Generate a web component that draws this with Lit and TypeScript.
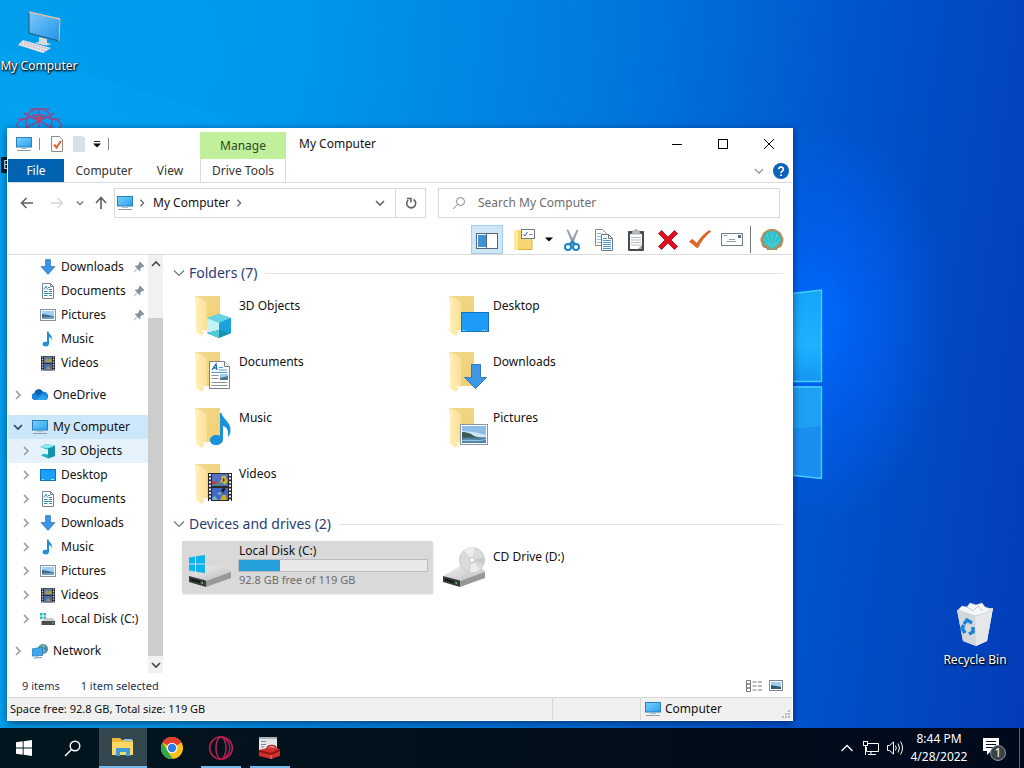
import { LitElement, html, css, nothing, TemplateResult } from "lit";
import { customElement, state } from "lit/decorators.js";
import { classMap } from "lit/directives/class-map.js";
import { styleMap } from "lit/directives/style-map.js";

type Icon = () => TemplateResult;

/* ---------- small (16px) icons ---------- */

const monitor: Icon = () => html`<svg width="16" height="16" viewBox="0 0 16 16" aria-hidden="true">
  <defs><linearGradient id="scr" x1="0" y1="0" x2="1" y2="1"><stop offset="0" stop-color="#79d2fb"/><stop offset="1" stop-color="#2aa0ee"/></linearGradient></defs>
  <rect x=".5" y="1.500" width="15" height="9.500" fill="url(#scr)" stroke="#2a7fb8"/>
  <path d="M5 12.500h6" stroke="#a9c0cf"/><path d="M1 14.500h14" stroke="#8d9ca8"/></svg>`;

const arrowDown: Icon = () => html`<svg width="16" height="16" viewBox="0 0 16 16" aria-hidden="true">
  <path d="M5.500.5h5v7h4.500L8 15.500 1 7.500h4.500z" fill="#3d94e3" stroke="#2f7cc4" stroke-width=".7"/></svg>`;

const documentIcon: Icon = () => html`<svg width="16" height="16" viewBox="0 0 16 16" aria-hidden="true">
  <path d="M2.500.5h8l3 3v12h-11z" fill="#fff" stroke="#73828c"/><path d="M10.500.5v3h3" fill="none" stroke="#73828c"/>
  <path d="M4 6.500l2-3.500 1.500 3.500M8 4.500h2M4 8.500h3.500M9 6.500h3M9 8.500h3M4 10.500h8M4 12.500h3.500M9 12.500h3" fill="none" stroke="#3b8fae"/></svg>`;

const pictureIcon: Icon = () => html`<svg width="16" height="16" viewBox="0 0 16 16" aria-hidden="true">
  <rect x=".5" y="2.500" width="15" height="11" fill="#fff" stroke="#8795a1"/>
  <rect x="2" y="4" width="12" height="8" fill="#9fd0f3"/><path d="M2 7l4 .5 8 2V12H2z" fill="#3f6e8c"/><path d="M2 10.500l12-.5v2H2z" fill="#6fa9cf"/></svg>`;

const musicIcon: Icon = () => html`<svg width="16" height="16" viewBox="0 0 16 16" aria-hidden="true">
  <path d="M7 .5h1.500c.3 3 4.500 4 3.500 9.500-.2-2.500-1.200-3.500-3-4V12.500c0 2-1.500 3-3.200 3S2.500 14.500 2.500 13s1.500-2.300 3-2.300c.6 0 1 .1 1.500.3z" fill="#1e90d8"/></svg>`;

const videoIcon: Icon = () => html`<svg width="16" height="16" viewBox="0 0 16 16" aria-hidden="true">
  <rect x="1" y="1" width="14" height="14.500" fill="#2c2c30"/>
  <rect x="4" y="1.500" width="8" height="6.500" fill="#5f79a8"/><rect x="4" y="9" width="8" height="6" fill="#4b6cae"/>
  <path d="M5 6l2-3 2 2 1-2 2 2v2H5zM6 14l2-3 3 3z" fill="#a69a45"/>
  <path d="M2.500 1.500v14M13.500 1.500v14" stroke="#e4e4e4" stroke-width="1.200" stroke-dasharray="1.200 1.300"/></svg>`;

const cloudIcon: Icon = () => html`<svg width="16" height="16" viewBox="0 0 16 16" aria-hidden="true">
  <path d="M3.500 13A3.500 3.500 0 0 1 2.500 6a4.500 4.500 0 0 1 8.500-1A4 4 0 0 1 16 9.500a3.300 3.300 0 0 1-3 3.500z" fill="#1a86d9"/>
  <path d="M2.500 6a4.500 4.500 0 0 1 8.500-1L6 9z" fill="#0c5fb3"/><path d="M3.500 13L11 8l4.800 3a3 3 0 0 1-2.800 2z" fill="#2ea5ee"/></svg>`;

const cubeIcon: Icon = () => html`<svg width="16" height="16" viewBox="0 0 16 16" aria-hidden="true">
  <path d="M0 4l6-3 9 1.500v10.500l-7 2.500-7-3 3-2V5z" fill="#27b2c8"/><path d="M0 4l7-3 8 2-7 2.500z" fill="#8ce9ee"/>
  <path d="M8 5.500L15 3v10l-7 2.500z" fill="#1593ad"/><path d="M3 5.500l5 1v5l-5-1z" fill="#d8f7f7"/></svg>`;

const desktopIcon: Icon = () => html`<svg width="16" height="16" viewBox="0 0 16 16" aria-hidden="true">
  <rect x=".5" y="2.500" width="15" height="11" fill="#18a0fb" stroke="#1573b5"/><path d="M2 12.500h2M11 12.500h3" stroke="#bfe4ff"/></svg>`;

const diskIcon: Icon = () => html`<svg width="16" height="16" viewBox="0 0 16 16" aria-hidden="true">
  <path d="M0 2h2.500v2.500H0zM3.500 2H6v2.500H3.500zM0 5.500h2.500V8H0zM3.500 5.500H6V8H3.500z" fill="#25b5c4"/>
  <path d="M2 10l3-3h8l2 3z" fill="#c9cccf"/><path d="M1.500 10h13.500v4H1.500z" fill="#4a4d50"/><path d="M12 12h1.500" stroke="#7ce07c"/></svg>`;

const networkIcon: Icon = () => html`<svg width="16" height="16" viewBox="0 0 16 16" aria-hidden="true">
  <circle cx="11" cy="6" r="5" fill="#4b87b0"/><path d="M8 3l4-2 2 3-3 1 3 3-3 2z" fill="#77b49e"/>
  <path d="M0 6l10.500-2v8.500L0 13z" fill="#3fa9ef" stroke="#2f78b0" stroke-width=".8"/><path d="M5 13v1.500M2 15l8-.5" stroke="#7c94a5"/></svg>`;

const pin: Icon = () => html`<svg width="12" height="12" viewBox="0 0 12 12" aria-hidden="true">
  <path d="M7 1l4 4-1 .8-.9-.3L7 7.800 6.800 10 2.200 5.300l2-.3L6.500 2.900 6.200 2zM4 7.500L.8 11.200" fill="#8a929b" stroke="#8a929b" stroke-width=".8"/></svg>`;

const chev = (dir: "right" | "down" | "up", size = 10) => {
  const d = { right: "M3 1l4 4-4 4", down: "M1 3l4 4 4-4", up: "M1 7l4-4 4 4" }[dir];
  return html`<svg class="chev" width=${size} height=${size} viewBox="0 0 10 10" aria-hidden="true"><path d=${d} fill="none" stroke="currentColor" stroke-width="1.600"/></svg>`;
};

const thinChevron = html`<svg class="chev" width="12" height="12" viewBox="0 0 12 12" aria-hidden="true"><path d="M1 3.500l5 5 5-5" fill="none" stroke="currentColor" stroke-width="1.100"/></svg>`;

/* ---------- large (48px) icons ---------- */

const folder = (inner: TemplateResult) => html`<svg class="big" width="48" height="48" viewBox="0 0 48 48" aria-hidden="true">
  <defs>
    <linearGradient id="fb" x1="0" y1="0" x2="1" y2="1"><stop offset="0" stop-color="#f3d98b"/><stop offset="1" stop-color="#f0cf74"/></linearGradient>
    <linearGradient id="ff" x1="0" y1="0" x2="1" y2="0"><stop offset="0" stop-color="#ffefb8"/><stop offset="1" stop-color="#f9e096"/></linearGradient>
  </defs>
  <path d="M7 4h25v34H13z" fill="url(#fb)"/><path d="M8 4l11 6v27l-5 7-6-4z" fill="url(#ff)"/><path d="M14 38h5l-4 3z" fill="#fff7dc"/>${inner}</svg>`;

const bigCube: Icon = () => folder(html`<svg>
  <path d="M31 22l12 4v15l-12 5-12-5V26z" fill="#2ab3d0"/><path d="M31 22l12 4-12 5-12-5z" fill="#62d4e3"/>
  <path d="M19 26l12 5v7l-12 3z" fill="#c6f3f5"/><path d="M31 31l12-5v15l-12-3z" fill="#1ba1dc"/><path d="M19 41l12-3 12 3-12 5z" fill="#1993ae"/><path d="M31 38v8l-12-5z" fill="#52cbd5"/></svg>`);

const bigDesktop: Icon = () => folder(html`<svg>
  <rect x="19.500" y="20.500" width="27" height="19" fill="#1c9cf6" stroke="#1776bb"/><path d="M21 38.500h3M40 38.500h5" stroke="#bfe4ff" stroke-dasharray="1.200 1"/></svg>`);

const bigDoc: Icon = () => folder(html`<svg>
  <path d="M21.500 13.500h15l5 5v22h-20z" fill="#fff" stroke="#7b8184"/><path d="M36.500 13.500v5h5" fill="#eee" stroke="#7b8184"/>
  <path d="M24 22l4-6 1 6M25.500 20h3" fill="none" stroke="#1c6db5" stroke-width="1.300"/>
  <path d="M31 19.500h4M31 22h8M23.500 24.500h16" stroke="#4d9fd8"/><path d="M23.500 27.500h7M23.500 30.500h7M23.500 34.500h16M23.500 37.500h16" stroke="#8c9297"/>
  <rect x="32" y="26" width="8" height="6" fill="#51758b"/><path d="M32 26h8v2l-8 2z" fill="#9ccdee"/></svg>`);

const bigDownload: Icon = () => folder(html`<svg><path d="M29.500 16.500h9v13h6L33.500 40.500l-11-11h7z" fill="#3e97e4" stroke="#3079c0"/></svg>`);

const bigMusic: Icon = () => folder(html`<svg>
  <path d="M32 9h1.500c1 6 10 9 9 18-.2 3-1.200 5-2.500 6 1-6-1-10-5-11v13c0 4-3.500 6-7 6s-6-2-6-5 3-5 6.500-5c1.300 0 2.500.2 3.500.8z" fill="#1a91da"/></svg>`);

const bigPicture: Icon = () => folder(html`<svg>
  <rect x="18.500" y="20.500" width="27" height="20" fill="#fff" stroke="#8795a1"/><rect x="20" y="22" width="24" height="17" fill="#8cbce9"/>
  <path d="M20 27l12 1 12 3v2H20z" fill="#cfe5f3"/><path d="M20 28c5 0 8 1 12 4l7 2H20z" fill="#395b55"/><path d="M20 33.500h24V39H20z" fill="#4b80a3"/><path d="M20 36c8-1 16 1 24-1v1c-8 2-16 1-24 1z" fill="#9cc5dd"/></svg>`);

const bigVideo: Icon = () => folder(html`<svg>
  <rect x="20" y="13" width="24" height="28" fill="#2a2a2e"/><rect x="24" y="14" width="16" height="12" fill="#5573c4"/><rect x="24" y="28" width="16" height="12" fill="#4468c0"/>
  <path d="M24 21l3 1 2-1 1 3h-6z" fill="#c4384a"/><path d="M33 16h5v3l2 1-3 5-3-3-3 1 3-4z" fill="#d3b92f"/><path d="M29 22l3 2-2 2h-3z" fill="#4c9c46"/><path d="M35 18l2 2-2 2z" fill="#222"/>
  <path d="M35 28h2v2l-2 3-2-3z" fill="#222"/><path d="M32 40l2-5h4l1 5z" fill="#c9ad2a"/><path d="M24 38l3-2 3 4h-6zM29 33l3-1 2 2-3 1z" fill="#6fb3c9"/>
  <path d="M22 14v27M42 14v27" stroke="#ececec" stroke-width="2" stroke-dasharray="2 1.600"/></svg>`);

const driveBody = html`<svg>
  <defs><linearGradient id="dt" x1="0" y1="0" x2="1" y2="1"><stop offset="0" stop-color="#f1f1f1"/><stop offset="1" stop-color="#bcbcbc"/></linearGradient></defs>
  <path d="M1 33l17-10h18l7 5v3L18 38z" fill="url(#dt)"/><path d="M18 38l25-9v6l-25 9z" fill="#989898"/><path d="M1 33l17 4.500V44L1 39z" fill="#3a3a3a"/><path d="M3 35.500l9 2.500v2l-9-2.500z" fill="#161616"/><path d="M13.500 39l1.500.5v1.500l-1.500-.5z" fill="#6be06b"/></svg>`;

const localDisk: Icon = () => html`<svg class="big" width="48" height="48" viewBox="0 0 48 48" aria-hidden="true">${driveBody}
  <path d="M1 14.500l6-1v7H1zM8 13.300l9-1.300v8.500H8zM1 21.500h6v7l-6-1zM8 21.500h9V30l-9-1.300z" fill="#0cb3ef"/></svg>`;

const cdDrive: Icon = () => html`<svg class="big" width="48" height="48" viewBox="0 0 48 48" aria-hidden="true">${driveBody}
  <circle cx="30" cy="17" r="12.500" fill="#d9dbdc" stroke="#c6c9cb"/><path d="M30 17L22 7A12.500 12.500 0 0 1 33 4.800zM30 17l8 9.500a12.500 12.500 0 0 1-10 2.500z" fill="#ecedee"/><path d="M30 17l12-3a12.500 12.500 0 0 1-.5 7z" fill="#c8cbcd"/>
  <circle cx="30" cy="17" r="3" fill="#e9eaeb" stroke="#c4c7c9"/><circle cx="30" cy="17" r="1.200" fill="#fff"/></svg>`;

/* ---------- data ---------- */

interface TreeRow { name: string; icon: Icon; level: 0 | 1; expand?: "right" | "down"; pinned?: boolean; look?: "current" | "hover"; gap?: boolean }

const TREE: TreeRow[] = [
  { name: "Downloads", icon: arrowDown, level: 1, pinned: true },
  { name: "Documents", icon: documentIcon, level: 1, pinned: true },
  { name: "Pictures", icon: pictureIcon, level: 1, pinned: true },
  { name: "Music", icon: musicIcon, level: 1 },
  { name: "Videos", icon: videoIcon, level: 1 },
  { name: "OneDrive", icon: cloudIcon, level: 0, expand: "right", gap: true },
  { name: "My Computer", icon: monitor, level: 0, expand: "down", look: "current", gap: true },
  { name: "3D Objects", icon: cubeIcon, level: 1, expand: "right", look: "hover" },
  { name: "Desktop", icon: desktopIcon, level: 1, expand: "right" },
  { name: "Documents", icon: documentIcon, level: 1, expand: "right" },
  { name: "Downloads", icon: arrowDown, level: 1, expand: "right" },
  { name: "Music", icon: musicIcon, level: 1, expand: "right" },
  { name: "Pictures", icon: pictureIcon, level: 1, expand: "right" },
  { name: "Videos", icon: videoIcon, level: 1, expand: "right" },
  { name: "Local Disk (C:)", icon: diskIcon, level: 1, expand: "right" },
  { name: "Network", icon: networkIcon, level: 0, expand: "right", gap: true },
];

const FOLDERS: { name: string; icon: Icon }[] = [
  { name: "3D Objects", icon: bigCube },
  { name: "Desktop", icon: bigDesktop },
  { name: "Documents", icon: bigDoc },
  { name: "Downloads", icon: bigDownload },
  { name: "Music", icon: bigMusic },
  { name: "Pictures", icon: bigPicture },
  { name: "Videos", icon: bigVideo },
];

const TOOLS: { label: string; icon: Icon }[] = [
  { label: "Cut", icon: () => html`<svg width="24" height="24" viewBox="0 0 24 24" aria-hidden="true">
    <path d="M7 2l1 0 7 14-2 1zM18 2l-1 0-7 14 2 1z" fill="#a4adb5" stroke="#7d8790" stroke-width=".6"/>
    <circle cx="8" cy="19" r="3" fill="none" stroke="#1b82c8" stroke-width="2"/><circle cx="16" cy="19" r="3" fill="none" stroke="#1b82c8" stroke-width="2"/><path d="M9.500 16.500l3-3 3 3" fill="none" stroke="#1b82c8" stroke-width="2"/></svg>` },
  { label: "Copy", icon: () => html`<svg width="24" height="24" viewBox="0 0 24 24" aria-hidden="true">
    <path d="M3.500 1.500h7l4 4v12h-11z" fill="#fff" stroke="#7f8c97"/><path d="M5 5.500h4M5 8.500h7M5 11.500h7M5 14.500h7" stroke="#8cb8dc"/>
    <path d="M9.500 6.500h7l4 4v12h-11z" fill="#fff" stroke="#6c7a86"/><path d="M16.500 6.500v4h4" fill="none" stroke="#6c7a86"/><path d="M11 10.500h4M11 12.500h8M11 14.500h8M11 16.500h8M11 18.500h8M11 20.500h8" stroke="#4f97d0"/></svg>` },
  { label: "Paste", icon: () => html`<svg width="24" height="24" viewBox="0 0 24 24" aria-hidden="true">
    <rect x="4" y="3" width="16" height="20" rx="1" fill="#444b50"/><rect x="6" y="6" width="12" height="15" fill="#fff"/><path d="M8 5V3h2.500a1.500 1.500 0 0 1 3 0H16v3H8z" fill="#b9c0c5" stroke="#7d858b" stroke-width=".6"/>
    <path d="M7 9.500h10M7 12h10M7 14.500h10M7 17h10" stroke="#b2b8bc"/><path d="M14 21l4-4v4z" fill="#9aa2a8"/></svg>` },
  { label: "Delete", icon: () => html`<svg width="24" height="24" viewBox="0 0 24 24" aria-hidden="true">
    <path d="M5.500 2.500L12 9l6.500-6.500 3 3L15 12l6.500 6.500-3 3L12 15l-6.500 6.500-3-3L9 12 2.500 5.500z" fill="#dc0f1e" stroke="#a80a17" stroke-width=".8"/></svg>` },
  { label: "Properties", icon: () => html`<svg width="24" height="24" viewBox="0 0 24 24" aria-hidden="true">
    <path d="M1.500 13.500l3-2 4.500 4C13 9 17 5 21.500 2.500l1 1C17 8 13 13 9.500 20z" fill="#e5662a" stroke="#cf551a" stroke-width=".8"/></svg>` },
  { label: "Rename", icon: () => html`<svg width="24" height="24" viewBox="0 0 24 24" aria-hidden="true">
    <rect x="1.500" y="5.500" width="21" height="12" fill="#fff" stroke="#6e7e8c"/><path d="M3.500 7.500h4M9 11.500h6M7 13.500h9" stroke="#8fa1b0"/><rect x="18" y="7" width="3" height="3" fill="#5b6f86"/></svg>` },
];

const DISK = { total: 119, free: 92.8 };

@customElement("app-root")
export class AppRoot extends LitElement {
  @state() private query = "";

  static styles = css`
    :host { display: block; height: 100vh; overflow: hidden; font: 12px/16px "Noto Sans", "Open Sans", sans-serif; color: #111; }
    * { box-sizing: border-box; }
    button, input { font: inherit; color: inherit; border: 0; padding: 0; margin: 0; background: none; }
    button { display: inline-flex; align-items: center; justify-content: center; }
    a { color: inherit; text-decoration: none; }
    ul { list-style: none; margin: 0; padding: 0; }
    svg { display: block; flex: none; }
    .screen { display: flex; flex-direction: column; height: 100%; }
    .desktop {
      position: relative; flex: 1; min-height: 0; overflow: hidden;
      background:
        radial-gradient(ellipse 130px 200px at 815px 320px, rgba(0,106,255,.95) 0%, rgba(0,100,250,.7) 35%, rgba(0,90,230,0) 100%),
        radial-gradient(ellipse 700px 420px at 150px 60px, rgba(0,160,248,.4), rgba(0,160,250,0) 100%),
        linear-gradient(97deg, #009ee8 0%, #0096e8 25%, #0076dc 52%, #0054cc 78%, #043cb8 100%);
    }
    .beam { position: absolute; left: 0; top: 0; }
    .shortcut { position: absolute; display: flex; flex-direction: column; align-items: center; gap: 4px; width: 76px; color: #fff; white-space: nowrap; text-shadow: 1px 1px 2px #000, 0 1px 2px #000; }
    .s1 { left: 1px; top: 10px; }
    .s2 { left: 1px; top: 105px; }
    .s2 span { align-self: flex-start; padding-left: 2px; background: #000c; }
    .bin { right: 11px; bottom: 60px; }

    .window { position: absolute; left: 7px; right: 231px; top: 128px; bottom: 7px; display: flex; flex-direction: column; background: #fff; border: 1px solid #fff; border-top: 0; box-shadow: 0 2px 8px #0028; }
    .title { display: grid; grid-template-columns: 192px 86px 1fr auto; height: 31px; }
    .quick { display: flex; align-items: center; padding-left: 8px; gap: 7px; }
    .quick i { width: 1px; height: 12px; background: #8c8c8c; }
    .quick .wide { margin-left: 2px; }
    .manage { margin-top: 4px; background: #c1f09c; color: #2b4a1b; display: flex; align-items: center; justify-content: center; }
    .title h1 { margin: 0; padding: 8px 0 0 13px; font: inherit; }
    .caption { display: flex; }
    .caption button { width: 46px; height: 31px; }
    .tabs { display: flex; height: 24px; border-bottom: 1px solid #dadbdc; align-items: stretch; color: #333; }
    .tabs .file { width: 56px; background: #0063b1; color: #fff; }
    .tabs .computer { width: 80px; }
    .tabs .view { width: 52px; }
    .tabs .tools { width: 86px; margin: 0 auto 0 4px; border: 1px solid #dadbdc; border-width: 0 1px; }
    .tabs .more { width: 24px; color: #a0a4a8; }
    .tabs .help { width: 20px; margin-right: 1px; }
    .nav { display: flex; align-items: center; padding: 5px 12px 0 0; }
    .history { display: flex; width: 106px; align-items: center; color: #666; }
    .history button { height: 28px; }
    .w1 { width: 38px; } .w2 { width: 22px; } .w3 { width: 24px; } .w4 { width: 18px; }
    .address { flex: 310 1 0; display: flex; align-items: center; height: 30px; border: 1px solid #d9d9d9; }
    .address svg { margin-left: 2px; }
    .address .chev { margin: 0 7px 0 5px; color: #666; }
    .address .drop { width: 30px; height: 28px; margin-left: auto; color: #666; }
    .address .drop .chev { margin: 0; }
    .address .reload { width: 30px; height: 28px; border-left: 1px solid #d9d9d9; }
    .address .reload svg { margin: 0; }
    .search { flex: 327 1 0; display: flex; align-items: center; gap: 12px; margin-left: 12px; height: 30px; padding-left: 13px; border: 1px solid #d9d9d9; }
    .search input { flex: 1; min-width: 0; outline: 0; }
    .search input::placeholder { color: #6d6d6d; opacity: 1; }
    .toolbar { display: flex; justify-content: flex-end; align-items: center; height: 37px; padding: 7px 4px 0 0; border-bottom: 1px solid #dcdcdc; }
    .toolbar button { width: 32px; height: 29px; }
    .toolbar .on { background: #cfe6f7; border: 1px solid #a5cdec; margin-right: 6px; }
    .toolbar .tiny { width: 15px; }
    .toolbar i { width: 1px; height: 27px; margin: 0 5px 0 2px; background: #777; }

    .body { flex: 1; min-height: 0; display: flex; }
    .tree { width: 140px; flex: none; overflow: hidden; }
    .tree button { width: 100%; height: 24px; justify-content: flex-start; padding-left: 2px; white-space: nowrap; }
    .tree .l1 button { padding-left: 10px; }
    .tree .gap { margin-top: 8px; }
    .tree .current { background: #cce6fa; }
    .tree .hover { background: #e5f2fc; }
    .tree .twist { width: 16px; display: flex; justify-content: center; margin-right: 6px; color: #9a9a9a; }
    .tree .current .twist { color: #2c4456; }
    .tree .name { margin-left: 5px; margin-right: auto; }
    .tree .pin { margin-right: 3px; }
    .scroll { width: 15px; flex: none; display: flex; flex-direction: column; background: #f1f1f1; color: #444; }
    .scroll button { height: 17px; }
    .scroll .before { height: 46px; }
    .scroll .thumb { flex: 1; background: #cdcdcd; }
    .files { flex: 1; min-width: 0; overflow: hidden; padding: 4px 9px 0 10px; }
    .files h2 { display: flex; align-items: center; gap: 4px; margin: 0; height: 31px; padding-bottom: 3px; font: 14px/20px "Noto Sans", "Open Sans", sans-serif; color: #2b3c74; white-space: nowrap; }
    .files h2 .chev { color: #66707c; }
    .files h2::after { content: ""; flex: 1; height: 1px; margin-left: 4px; background: #e4e4e4; }
    .tiles { display: grid; grid-template-columns: repeat(auto-fill, 250px); gap: 4px; padding-left: 9px; }
    .tile { display: flex; height: 52px; padding: 2px 4px 0 6px; }
    .tile .text { flex: 1; padding: 6px 0 0 3px; min-width: 0; }
    .tile.selected { background: #d9d9d9; box-shadow: 1px 1px 2px #ccc; }
    .tile.selected .text { padding-top: 0; padding-left: 2px; }
    .tile.selected span { display: block; padding-left: 1px; }
    .tile .free { font-size: 11px; color: #6d6d6d; }
    .meter { height: 13px; border: 1px solid #bcbcbc; background: #e8e8e8; }
    .fill { height: 100%; background: #26a0da; }

    .details { display: flex; align-items: center; gap: 21px; height: 24px; padding: 2px 8px 0 14px; font-size: 11px; color: #1e3050; }
    .details .modes { display: flex; margin-left: auto; gap: 6px; }
    .status { display: flex; height: 23px; border-top: 1px solid #d7d7d7; background: #f0f0f0; }
    .status div { display: flex; align-items: center; border-left: 1px solid #d7d7d7; gap: 4px; }
    .status .space { flex: 1; border: 0; padding-left: 2px; font-size: 11px; }
    .status .blank { width: 88px; }
    .status .where { width: 152px; padding-left: 4px; }
    .status .grip { margin-left: auto; align-self: flex-end; }

    .taskbar { display: flex; flex: none; height: 40px; background: linear-gradient(90deg, #02161f, #020f1c 50%, #010a1b); color: #fff; }
    .apps { display: flex; gap: 1px; }
    .apps button { width: 48px; height: 40px; position: relative; }
    .apps .start { margin-right: -1px; }
    .apps .find { margin-right: 2px; }
    .apps .active { background: #33474f; border-bottom: 2px solid #76b9ed; }
    .apps .open::after { content: ""; position: absolute; left: 4px; right: 4px; bottom: 0; height: 2px; background: #76b9ed; }
    .tray { display: flex; margin-left: auto; align-items: stretch; }
    .tray button { width: 24px; }
    .tray .clock { width: 64px; flex-direction: column; line-height: 18px; }
    .tray .note { width: 48px; }
    .tray .peek { width: 5px; border-left: 1px solid #5a6570; }
  `;

  private treeRow(r: TreeRow) {
    return html`<li class=${classMap({ ["l" + r.level]: true, gap: !!r.gap, current: r.look === "current", hover: r.look === "hover" })}>
      <button><span class="twist">${r.expand ? chev(r.expand) : nothing}</span>${r.icon()}<span class="name">${r.name}</span>${r.pinned ? html`<span class="pin">${pin()}</span>` : nothing}</button></li>`;
  }

  private titleBar() {
    return html`<header class="title">
      <div class="quick">${monitor()}<i></i>
        <svg class="wide" width="16" height="18" viewBox="0 0 16 18" aria-hidden="true"><path d="M2.500 1.500h8l3 3v12h-11z" fill="#fff" stroke="#8a8a8a"/><path d="M5 9.500l2.500 3L12 6" fill="none" stroke="#e0622c" stroke-width="2"/></svg>
        <svg width="14" height="18" viewBox="0 0 14 18" aria-hidden="true"><path d="M1 1h9l3 2v14H1z" fill="#d5e1ec"/></svg>
        <svg width="8" height="8" viewBox="0 0 8 8" aria-hidden="true"><path d="M1 1.500h6" stroke="#222"/><path d="M0 3.500h8L4 7.500z" fill="#000"/></svg>
        <i></i></div>
      <div class="manage">Manage</div>
      <h1>My Computer</h1>
      <div class="caption">
        <button aria-label="Minimize"><svg width="12" height="12" viewBox="0 0 12 12"><path d="M1 6.500h10" stroke="#000"/></svg></button>
        <button aria-label="Maximize"><svg width="12" height="12" viewBox="0 0 12 12"><rect x="1.500" y="1.500" width="9" height="9" fill="none" stroke="#000"/></svg></button>
        <button aria-label="Close"><svg width="12" height="12" viewBox="0 0 12 12"><path d="M1 1l10 10M11 1L1 11" stroke="#000"/></svg></button>
      </div></header>
      <nav class="tabs">
        <button class="file">File</button><button class="computer">Computer</button><button class="view">View</button><button class="tools">Drive Tools</button>
        <button class="more" aria-label="Expand ribbon">${chev("down")}</button>
        <button class="help" aria-label="Help"><svg width="16" height="16" viewBox="0 0 16 16"><circle cx="8" cy="8" r="8" fill="#0b62b8"/><path d="M5.700 6.200a2.300 2.300 0 1 1 3.600 1.900c-.9.600-1.300 1-1.300 1.900M8 11.300v1.800" fill="none" stroke="#fff" stroke-width="1.700"/></svg></button>
      </nav>`;
  }

  private navigation() {
    return html`<div class="nav">
      <div class="history">
        <button class="w1" aria-label="Back"><svg width="14" height="12" viewBox="0 0 14 12"><path d="M13 6H2M6.500 1L1.500 6l5 5" fill="none" stroke="#606060" stroke-width="1.600"/></svg></button>
        <button class="w2" aria-label="Forward"><svg width="14" height="12" viewBox="0 0 14 12"><path d="M1 6h11M7.500 1l5 5-5 5" fill="none" stroke="#d6d6d6" stroke-width="1.400"/></svg></button>
        <button class="w3" aria-label="Recent locations">${chev("down", 8)}</button>
        <button class="w4" aria-label="Up"><svg width="12" height="14" viewBox="0 0 12 14"><path d="M6 13V2M1 7l5-5.500L11 7" fill="none" stroke="#606060" stroke-width="1.600"/></svg></button>
      </div>
      <div class="address">${monitor()}${chev("right", 8)}<a href="#">My Computer</a>${chev("right", 8)}
        <button class="drop" aria-label="Previous locations">${chev("down")}</button>
        <button class="reload" aria-label="Refresh"><svg width="12" height="14" viewBox="0 0 12 14"><path d="M8.500 3.500A4.500 4.500 0 1 1 3.200 4M2 2.500h4v4" fill="none" stroke="#606060" stroke-width="1.600"/></svg></button>
      </div>
      <label class="search"><svg width="14" height="14" viewBox="0 0 14 14" aria-hidden="true"><circle cx="8.500" cy="5.500" r="4" fill="none" stroke="#858585"/><path d="M5.500 8.500L1 13" stroke="#858585"/></svg>
        <input type="text" aria-label="Search My Computer" placeholder="Search My Computer" .value=${this.query} @input=${(e: Event) => (this.query = (e.target as HTMLInputElement).value)}></label>
    </div>
    <div class="toolbar">
      <button class="on" aria-label="Navigation pane"><svg width="24" height="20" viewBox="0 0 24 20"><rect x="1.500" y="3.500" width="21" height="15" fill="#fff" stroke="#54687a"/><rect x="3" y="5" width="8" height="12" fill="#3c93dc"/><path d="M11.500 4v14" stroke="#54687a"/></svg></button>
      <button aria-label="Folder options"><svg width="24" height="24" viewBox="0 0 24 24"><path d="M1 2h18v20H1z" fill="#f5d672"/><path d="M1 2h4v20H1z" fill="#ffe9a2"/><path d="M5 21.500h14V12" fill="none" stroke="#dfb23f"/><rect x="8.500" y="1.500" width="13" height="9" fill="#fff" stroke="#6d7d8c"/><path d="M10.500 6l1.500 2 2.500-4" fill="none" stroke="#4a62a8"/><path d="M16 6.500h4" stroke="#8c98a6"/></svg></button>
      <button class="tiny" aria-label="Folder options menu"><svg width="8" height="5" viewBox="0 0 8 5"><path d="M0 .5h8L4 4.500z" fill="#000"/></svg></button>
      ${TOOLS.map((t) => html`<button aria-label=${t.label}>${t.icon()}</button>`)}
      <i></i>
      <button aria-label="Shell"><svg width="26" height="24" viewBox="0 0 26 24"><path d="M13 1c3-.5 5 .8 6 2 2.500.5 4 3 4 5 2 2 2 5 .5 7 .3 3-2 5-4.500 5L18 22H8l-1-2c-2.500 0-4.800-2-4.500-5C1 13 1 10 3 8c0-2 1.500-4.500 4-5 1-1.200 3-2.500 6-2z" fill="#b98c55"/>
        <path d="M13 3c5-.5 9 4 9 8.500 0 4-3 6-5.500 7L15 21h-4l-1.500-2.500c-3-1-5.500-3-5.500-7C4 7 8 2.500 13 3z" fill="#2fc0c9"/><path d="M13 20V4M11.500 19L8 6M14.500 19L18 6M10.500 18L5 11M15.500 18L21 11" stroke="#5ed6da" stroke-width=".8"/></svg></button>
    </div>`;
  }

  private desktopArt() {
    return html`<svg class="beam" width="1024" height="728" viewBox="0 0 1024 728" aria-hidden="true">
      <defs>
        <linearGradient id="b1" x1="0" y1="0" x2="1" y2="0"><stop offset="0" stop-color="#0aa8f8" stop-opacity=".3"/><stop offset="1" stop-color="#0a90f8" stop-opacity=".1"/></linearGradient>
        <linearGradient id="pane" x1="0" y1="0" x2="0" y2="1"><stop offset="0" stop-color="#16a4f8"/><stop offset=".6" stop-color="#1fb2ff"/><stop offset="1" stop-color="#1496f0"/></linearGradient>
      </defs>
      <path d="M0 48L790 290v100L0 728z" fill="url(#b1)"/>
      <path d="M780 295l42-5v92h-42z" fill="url(#pane)"/><path d="M780 386h42v93l-42-5z" fill="#1c8ef2"/>
      <path d="M780 386h42v40l-42 4z" fill="#1ea0f4"/>
      <path d="M780 295l41.500-5v91.500H780M780 387h41.500v91.500L780 474" fill="none" stroke="#3fd4ff" stroke-width="1.400"/></svg>`;
  }

  render() {
    const used = ((DISK.total - DISK.free) / DISK.total) * 100;
    return html`<div class="screen">
      <main class="desktop">
        ${this.desktopArt()}
        <a class="shortcut s1" href="#"><svg width="48" height="44" viewBox="0 0 48 44" aria-hidden="true">
          <defs><linearGradient id="lg" x1="0" y1="0" x2="1" y2="1"><stop offset="0" stop-color="#7cc9f8"/><stop offset="1" stop-color="#1f93ea"/></linearGradient></defs>
          <path d="M14 2l31 7-1 22-30-8z" fill="url(#lg)" stroke="#35506a"/><path d="M14 2l31 7" stroke="#d9c7b4" stroke-width="1.500"/><path d="M45 9l-1 22" stroke="#cfd6dc"/>
          <path d="M24 27l8 2v4l5 1-6 1.500-11-2.500 4-1.500z" fill="#d5dade"/><path d="M8 30l28 8-8 5L3 35z" fill="#e6e2ea"/><path d="M6 33.500l25 7.500M9 32l25 7" stroke="#a9a4b5" stroke-width=".8" stroke-dasharray="2 1"/></svg><span>My Computer</span></a>
        <a class="shortcut s2" href="#"><svg width="48" height="48" viewBox="0 0 48 48" aria-hidden="true">
          <g fill="none" stroke="#8a4f92" stroke-width="1.500"><ellipse cx="24" cy="20" rx="22" ry="8"/><ellipse cx="24" cy="16" rx="13" ry="12"/><path d="M9 8l30 16M39 8L9 24M14 4h20M17 10h14M3 14h10M35 14h10M24 3v20"/></g>
          <circle cx="24" cy="14" r="3" fill="#b04a68"/></svg><span>E</span></a>
        <a class="shortcut bin" href="#"><svg width="44" height="46" viewBox="0 0 44 46" aria-hidden="true">
          <path d="M4 8l36-2-6 33-11 5-13-5z" fill="#dfe3e6"/><path d="M4 8l18 4 18-6-6 33-11 5-13-5z" fill="#d3d8dc"/><path d="M22 12l18-6-6 33-11 5z" fill="#eceef0" opacity=".7"/>
          <path d="M5 8l4-4 5 1 3-4 6 2 6-2 3 4 6 2-5 4-11 3z" fill="#f5f6f7" stroke="#c2c8cd" stroke-width=".7"/><path d="M14 5l6 4 5-5 5 5" fill="none" stroke="#c4c9ce"/>
          <g fill="none" stroke="#1c82d6" stroke-width="3.500"><path d="M11 22l3-4 5 3"/><path d="M20 25l0 5-4 2"/><path d="M12 31l-3-5 2-3"/></g></svg><span>Recycle Bin</span></a>

        <section class="window" aria-label="My Computer">
          ${this.titleBar()}
          ${this.navigation()}
          <div class="body">
            <ul class="tree">${TREE.map((r) => this.treeRow(r))}</ul>
            <div class="scroll"><button aria-label="Scroll up">${chev("up")}</button><div class="before"></div><div class="thumb"></div><button aria-label="Scroll down">${chev("down")}</button></div>
            <div class="files">
              <h2>${thinChevron}Folders (7)</h2>
              <div class="tiles">${FOLDERS.map((f) => html`<a class="tile" href="#">${f.icon()}<div class="text">${f.name}</div></a>`)}</div>
              <h2>${thinChevron}Devices and drives (2)</h2>
              <div class="tiles">
                <a class="tile selected" href="#">${localDisk()}<div class="text"><span>Local Disk (C:)</span><div class="meter"><div class="fill" style=${styleMap({ width: `${used}%` })}></div></div><span class="free">${DISK.free} GB free of ${DISK.total} GB</span></div></a>
                <a class="tile" href="#">${cdDrive()}<div class="text">CD Drive (D:)</div></a>
              </div>
            </div>
          </div>
          <div class="details"><span>9 items</span><span>1 item selected</span>
            <div class="modes">
              <button aria-label="Details view"><svg width="16" height="14" viewBox="0 0 16 14"><path d="M.5 1.500h4v3.500h-4zM.5 5h4v4h-4zM.5 9h4v3.500h-4z" fill="#fff" stroke="#777"/><path d="M6.500 3h4M12 3h4M6.500 7h4M12 7h4M6.500 11h4M12 11h4" stroke="#777"/></svg></button>
              <button aria-label="Large icons view"><svg width="16" height="14" viewBox="0 0 16 14"><rect x="1.500" y="1.500" width="13" height="10" fill="#fff" stroke="#7b8a96"/><rect x="3" y="3" width="10" height="7" fill="#a6cfe9"/><path d="M3 6l5 1 5 1v2H3z" fill="#2f5873"/></svg></button>
            </div></div>
          <footer class="status"><div class="space">Space free: ${DISK.free} GB, Total size: ${DISK.total} GB</div><div class="blank"></div>
            <div class="where">${monitor()}<span>Computer</span><svg class="grip" width="12" height="12" viewBox="0 0 12 12" aria-hidden="true"><path d="M8 2h2v2H8zM8 5h2v2H8zM5 5h2v2H5zM8 8h2v2H8zM5 8h2v2H5zM2 8h2v2H2z" fill="#b9b9b9"/></svg></div></footer>
        </section>
      </main>

      <footer class="taskbar">
        <div class="apps">
          <button class="start" aria-label="Start"><svg width="16" height="16" viewBox="0 0 16 16"><path d="M0 2.300L6.700 1.300V7.600H0zM7.600 1.200L16 0v7.600H7.600zM0 8.400h6.700v6.300L0 13.700zM7.600 8.400H16V16l-8.400-1.200z" fill="#fff"/></svg></button>
          <button class="find" aria-label="Search"><svg width="17" height="17" viewBox="0 0 17 17"><circle cx="11" cy="6" r="4.800" fill="none" stroke="#fff" stroke-width="1.400"/><path d="M7.500 9.500L1 16" stroke="#fff" stroke-width="1.400"/></svg></button>
          <button class="active" aria-label="File Explorer"><svg width="24" height="22" viewBox="0 0 24 22"><path d="M1 2h8l2 2h11v14H1z" fill="#e9b93c"/><path d="M1 6h21v13H1z" fill="#fbd766"/><path d="M13 3h8v2h-8z" fill="#8fc3e8"/><path d="M5 12h14v8h-4v-4H9v4H5z" fill="#3f9bd9"/></svg></button>
          <button aria-label="Chrome"><svg width="24" height="24" viewBox="0 0 24 24"><circle cx="12" cy="12" r="11" fill="#fbc116"/><path d="M12 12L2.500 6.500a11 11 0 0 1 19 0z" fill="#e33b2e"/><path d="M2.500 6.500L8 16l5 7A11 11 0 0 1 2.500 6.500z" fill="#2da94f"/><path d="M12 7h9.800a11 11 0 0 0-.3-.5H12z" fill="#e33b2e"/><circle cx="12" cy="12" r="5.300" fill="#fff"/><circle cx="12" cy="12" r="4.200" fill="#2f7bea"/></svg></button>
          <button class="open" aria-label="Opera GX"><svg width="26" height="26" viewBox="0 0 26 26" fill="none" stroke="#b51e50"><circle cx="13" cy="13" r="11.300" stroke-width="1.600"/><ellipse cx="13" cy="13" rx="5" ry="11" stroke-width="1.600"/><path d="M15 2.500c9 4 9 17 0 21" stroke-width="1.400"/></svg></button>
          <button class="open" aria-label="Toolbox"><svg width="24" height="24" viewBox="0 0 24 24"><rect x="1" y="1" width="18" height="16" fill="#e4e7ea"/><path d="M1 1h18v2H1z" fill="#a9b1b9"/><path d="M3 5.500h5M3 8.500h5M3 11h3" stroke="#7f8a95"/><path d="M9 13c0-4 8-5 9-1" fill="none" stroke="#b91d1d" stroke-width="1.600"/><path d="M1 14l12-3 9 2v7l-9 3-12-3z" fill="#d32f2c"/><path d="M1 14l12 3 9-4v2l-9 4-12-3z" fill="#8d1414"/><path d="M13 19v4" stroke="#f08080"/></svg></button>
        </div>
        <div class="tray">
          <button aria-label="Show hidden icons"><svg width="12" height="8" viewBox="0 0 12 8"><path d="M.5 7L6 1.500 11.500 7" fill="none" stroke="#fff" stroke-width="1.300"/></svg></button>
          <button aria-label="Network"><svg width="18" height="16" viewBox="0 0 18 16" fill="none" stroke="#fff"><path d="M6 3.500h10.500v8H4.500V7M9 12v2.500M6 14.500h8"/><rect x="1.500" y="1.500" width="4" height="4"/><path d="M3.500 6v9"/></svg></button>
          <button aria-label="Volume"><svg width="18" height="16" viewBox="0 0 18 16" fill="none" stroke="#fff"><path d="M1.500 5.500h2L7.500 2v12L3.500 10.500h-2z"/><path d="M9.500 5.500q1.500 2.500 0 5M12 3.500q3 4.500 0 9M14.500 1.500q4 6.500 0 13"/></svg></button>
          <button class="clock"><span>8:44 PM</span><span>4/28/2022</span></button>
          <button class="note" aria-label="1 new notification"><svg width="30" height="30" viewBox="0 0 30 30"><path d="M3 5h16v13h-8l-4 4v-4H3z" fill="#fff"/><path d="M6 8.500h10M6 11.500h10M6 14.500h7" stroke="#020f1c" stroke-width="1.200"/><circle cx="18" cy="20" r="7.500" fill="#3a434b" stroke="#8b9299"/><text x="18" y="24" text-anchor="middle" font-size="12" fill="#fff">1</text></svg></button>
          <button class="peek" aria-label="Show desktop"></button>
        </div>
      </footer>
    </div>`;
  }
}
